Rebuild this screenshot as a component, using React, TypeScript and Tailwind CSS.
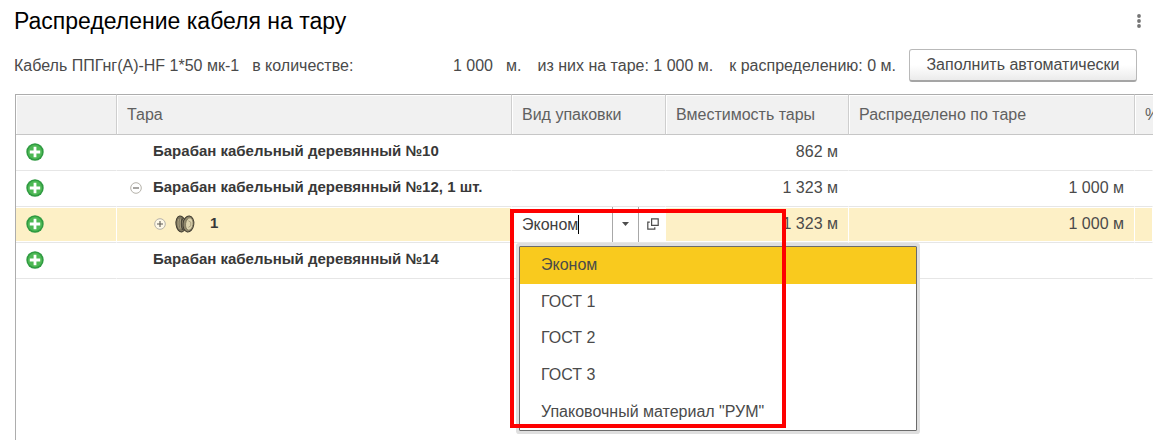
import { useState } from "react";
import type { ReactNode } from "react";

type Row = {
  id: string;
  name: string;
  level: 0 | 1;
  toggle?: "open" | "closed";
  capacity: string;
  allocated?: string;
  selected?: boolean;
};

const rows: Row[] = [
  { id: "d10", name: "Барабан кабельный деревянный №10", level: 0, capacity: "862 м" },
  {
    id: "d12",
    name: "Барабан кабельный деревянный №12, 1 шт.",
    level: 0,
    toggle: "open",
    capacity: "1 323 м",
    allocated: "1 000 м",
  },
  {
    id: "d12-1",
    name: "1",
    level: 1,
    toggle: "closed",
    capacity: "1 323 м",
    allocated: "1 000 м",
    selected: true,
  },
  { id: "d14", name: "Барабан кабельный деревянный №14", level: 0, capacity: "" },
];

const packings = ["Эконом", "ГОСТ 1", "ГОСТ 2", "ГОСТ 3", 'Упаковочный материал "РУМ"'];

function AddIcon() {
  return (
    <svg width="18" height="18" viewBox="0 0 18 18" aria-hidden="true">
      <circle cx="9" cy="9" r="8.7" fill="#2f9a41" />
      <circle cx="9" cy="9" r="7.2" fill="#4db854" />
      <path d="M9 3.8v10.4M3.8 9h10.4" stroke="#fff" strokeWidth="2.8" />
    </svg>
  );
}

function ToggleIcon({ open }: { open: boolean }) {
  return (
    <svg width="12" height="12" viewBox="0 0 12 12" fill="none" aria-hidden="true">
      <circle cx="6" cy="6" r="5.3" fill="#fff" fillOpacity="0.6" stroke="#b5b2aa" />
      <path d={open ? "M3 6h6" : "M3 6h6M6 3v6"} stroke="#5f5c56" strokeWidth="1.1" />
    </svg>
  );
}

function DrumIcon() {
  return (
    <svg width="20" height="18" viewBox="0 0 20 18" aria-hidden="true">
      <ellipse cx="5.8" cy="9" rx="4.8" ry="8" transform="rotate(-8 5.8 9)" fill="#7d765e" stroke="#3f3b30" />
      <path d="M6 3.5h7v11.5H6z" fill="#4b4739" />
      <path d="M3.8 4c-1.2 3-1 7 0.6 10M6 3.5c-1.4 3-1.2 8 0.4 11M8.6 4c-1.6 3-1.4 7 0.2 10.5" stroke="#b5ab8b" strokeWidth="0.8" fill="none" />
      <ellipse cx="13.4" cy="9" rx="5.4" ry="8" transform="rotate(8 13.4 9)" fill="#91896d" stroke="#3f3b30" />
      <ellipse cx="14.3" cy="9" rx="3.7" ry="6.2" transform="rotate(8 14.3 9)" fill="#ddd4ae" stroke="#706850" strokeWidth="0.7" />
      <path d="M13.4 5.8l2.4 1.4v3.6l-2.4 1.6" stroke="#9a9172" strokeWidth="0.8" fill="none" />
    </svg>
  );
}

function PackingField() {
  const [value, setValue] = useState("Эконом");
  const [open, setOpen] = useState(true);
  return (
    <div className="relative h-[35px] bg-white">
      <div className="flex h-full items-stretch">
        <div className="flex min-w-0 flex-1 items-center pl-[10px]">
          <input
            type="text"
            role="combobox"
            aria-label="Вид упаковки"
            aria-expanded={open}
            aria-controls="packing-list"
            value={value}
            onChange={(e) => setValue(e.target.value)}
            className="w-[56px] bg-transparent p-0 text-[#404040] outline-none"
          />
          <span className="h-[19px] w-px bg-black" aria-hidden="true" />
        </div>
        <button
          type="button"
          aria-label="Показать список"
          onClick={() => setOpen(!open)}
          className="flex w-[27px] items-center justify-center border-x border-[#a8a8a8] pb-[2px]"
        >
          <svg width="7" height="4" viewBox="0 0 7 4" aria-hidden="true">
            <path d="M0 0h7L3.5 4z" fill="#4d4d4d" />
          </svg>
        </button>
        <button type="button" aria-label="Открыть" className="flex w-[27px] items-center justify-center pb-[2px]">
          <svg width="12" height="12" viewBox="0 0 12 12" fill="none" stroke="#4d4d4d" strokeWidth="1.2" aria-hidden="true">
            <path d="M4.6 0.8h6.6v6.6H4.6z" />
            <path d="M2.8 4.2H0.8v7h7V9.2" />
          </svg>
        </button>
      </div>
      {open && (
        <ul
          id="packing-list"
          role="listbox"
          aria-label="Вид упаковки"
          className="absolute top-[39px] left-[7px] z-10 flex h-[185px] w-[398px] flex-col rounded-[1px] border border-[#6b6b6b] bg-white shadow-[0_0_0_3px_#dfdfdf]"
        >
          {packings.map((item) => (
            <li key={item} role="option" aria-selected={item === value} className="flex flex-1">
              <button
                type="button"
                onClick={() => setValue(item)}
                className={`flex w-full items-center pl-[21px] text-left ${item === value ? "bg-[#f9ca1e]" : "bg-white"}`}
              >
                {item}
              </button>
            </li>
          ))}
        </ul>
      )}
      <div className="pointer-events-none absolute top-[2px] -left-[2px] z-20 h-[219px] w-[276px] border-4 border-[#fe0000]" />
    </div>
  );
}

function HeadCell({ children }: { children?: ReactNode }) {
  return (
    <th
      scope="col"
      className="h-[41px] overflow-hidden border-t border-r border-b border-t-[#adadad] border-r-[#cecece] border-b-[#c6c6c6] bg-[#f1f1f1] px-[10px] text-left font-normal whitespace-nowrap text-[#606060] shadow-[inset_1px_1px_0_#fff] last:border-r-0"
    >
      {children}
    </th>
  );
}

export default function App() {
  return (
    <main className="flex min-h-screen flex-col overflow-hidden bg-white pl-[14px] font-['Liberation_Sans',Arial,sans-serif] text-[16px] leading-[20px] text-[#4a4a4a]">
      <header className="flex items-center justify-between pt-[8px] pr-[9px]">
        <h1 className="text-[23px] leading-[26px] text-black">Распределение кабеля на тару</h1>
        <button type="button" aria-label="Ещё" className="flex h-[26px] w-[10px] items-center justify-center">
          <svg width="4" height="14" viewBox="0 0 4 14" fill="#757575" aria-hidden="true">
            <circle cx="2" cy="2" r="1.9" />
            <circle cx="2" cy="7" r="1.9" />
            <circle cx="2" cy="12" r="1.9" />
          </svg>
        </button>
      </header>

      <section className="mt-[15px] flex items-center gap-[13px] pr-[16px] whitespace-nowrap">
        <span>Кабель ППГнг(А)-HF 1*50 мк-1</span>
        <span>в количестве:</span>
        <span className="min-w-0 flex-1 text-right">1 000</span>
        <div className="flex gap-[16px]">
          <span>м.</span>
          <span>из них на таре: 1 000 м.</span>
          <span>к распределению: 0 м.</span>
        </div>
        <button
          type="button"
          className="h-[33px] w-[228px] rounded-[3px] border border-b-2 border-[#b9b9b9] border-b-[#a5a5a5] bg-linear-to-b from-white from-50% to-[#ebebeb]"
        >
          Заполнить автоматически
        </button>
      </section>

      <div className="mt-[12px] ml-px flex-1 border-l border-[#adadad]">
        <table className="w-full table-fixed border-separate border-spacing-0">
          <colgroup>
            <col className="w-[101px]" />
            <col />
            <col className="w-[154px]" />
            <col className="w-[183px]" />
            <col className="w-[286px]" />
            <col className="w-[18px]" />
          </colgroup>
          <thead>
            <tr>
              <HeadCell />
              <HeadCell>Тара</HeadCell>
              <HeadCell>Вид упаковки</HeadCell>
              <HeadCell>Вместимость тары</HeadCell>
              <HeadCell>Распределено по таре</HeadCell>
              <HeadCell>%</HeadCell>
            </tr>
          </thead>
          <tbody>
            {rows.map((row) => {
              const cell = row.selected
                ? "h-[36px] border-r border-b border-r-white border-b-[#e6e6e6] bg-[#fdf0c6] p-0 pb-[2px] shadow-[inset_0_1px_0_#fff,inset_0_-1px_0_#fff]"
                : "h-[36px] border-r border-b border-r-transparent border-b-[#e6e6e6] bg-clip-padding p-0 pb-[2px]";
              return (
                <tr key={row.id}>
                  <td className={cell}>
                    <button type="button" aria-label="Добавить" className="ml-[10px] flex">
                      <AddIcon />
                    </button>
                  </td>
                  <td className={cell}>
                    <div className={`flex items-center ${row.level === 1 ? "pl-[37px]" : "pl-[13px]"}`}>
                      <span className="flex w-[12px]">
                        {row.toggle && (
                          <button type="button" aria-label={row.toggle === "open" ? "Свернуть" : "Развернуть"} className="flex">
                            <ToggleIcon open={row.toggle === "open"} />
                          </button>
                        )}
                      </span>
                      {row.level === 1 && (
                        <span className="ml-[9px] flex w-[24px]">
                          <DrumIcon />
                        </span>
                      )}
                      <span className="ml-[11px] pb-[2px] text-[15px] leading-[18px] font-bold whitespace-nowrap text-[#383838]">
                        {row.name}
                      </span>
                    </div>
                  </td>
                  <td className={row.selected ? "h-[36px] border-b border-[#e6e6e6] p-0" : cell}>
                    {row.selected && <PackingField />}
                  </td>
                  <td className={cell}>
                    <div className="pr-[10px] text-right">{row.capacity}</div>
                  </td>
                  <td className={cell}>
                    <div className="pr-[10px] text-right">{row.allocated}</div>
                  </td>
                  <td className={cell} />
                </tr>
              );
            })}
          </tbody>
        </table>
      </div>
    </main>
  );
}
